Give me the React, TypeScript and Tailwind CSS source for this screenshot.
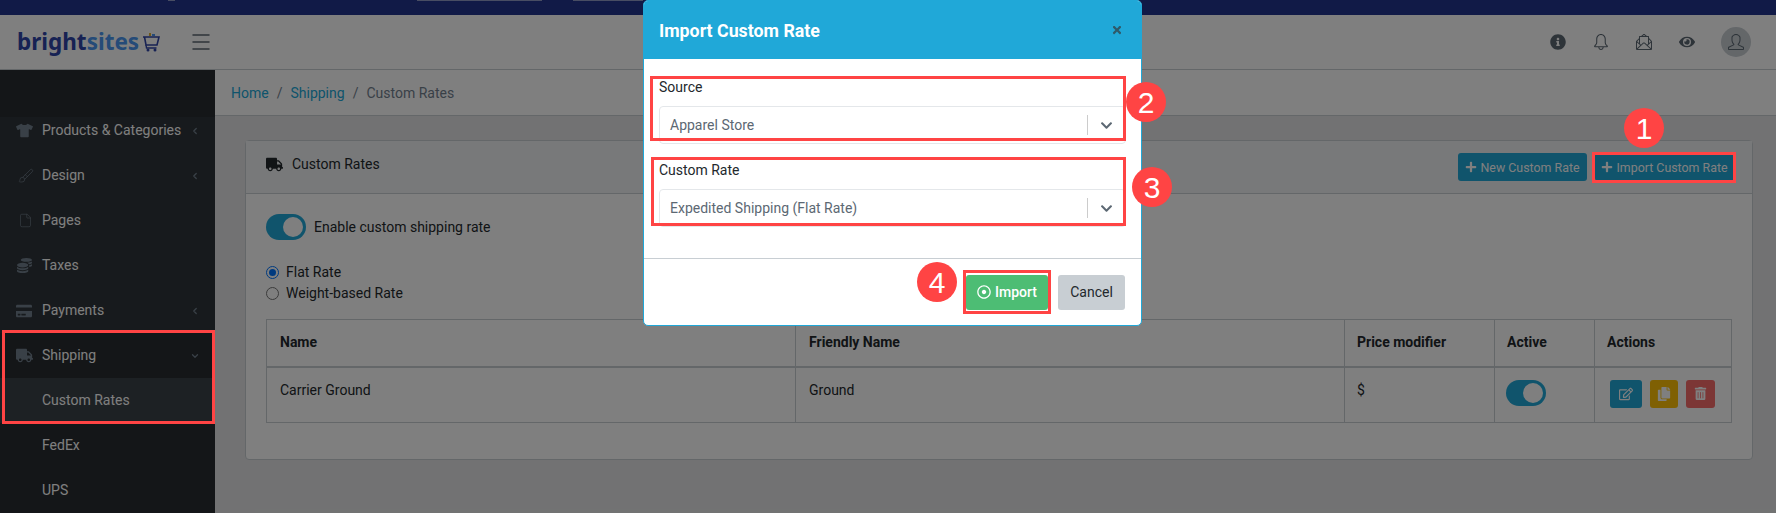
import { Brush, File, ChevronLeft, ChevronDown, Menu } from "lucide-react";
import { FaTshirt, FaCoins, FaCreditCard, FaTruck, FaInfoCircle, FaEye, FaPlus, FaTimes, FaRegDotCircle, FaRegEdit, FaCopy, FaTrashAlt, FaChevronDown } from "react-icons/fa";
import { SlBell, SlEnvolopeLetter, SlUser } from "react-icons/sl";

const menu = [
  { label: "Products & Categories", icon: <FaTshirt size={17} />, arrow: true },
  { label: "Design", icon: <Brush size={16} strokeWidth={1} className="ml-[2px]" />, arrow: true },
  { label: "Pages", icon: <File size={15} strokeWidth={1} className="ml-[2px]" /> },
  { label: "Taxes", icon: <FaCoins size={15} className="ml-[1px]" /> },
  { label: "Payments", icon: <FaCreditCard size={16} />, arrow: true },
];

function Toggle() {
  return (
    <span className="flex h-[26px] w-10 items-center justify-end rounded-full bg-[#20a8d8] pr-[3px]">
      <span className="h-5 w-5 rounded-full bg-white" />
    </span>
  );
}

function Callout({ n, className }: { n: number; className: string }) {
  return (
    <span className={"absolute flex h-10 w-10 items-center justify-center rounded-full bg-[#ff4444] text-[30px] text-white " + className} style={{ fontFamily: "Liberation Sans, sans-serif" }}>
      {n}
    </span>
  );
}

function SelectBox({ label, value }: { label: string; value: string }) {
  return (
    <div>
      <div className="text-[#23282c]">{label}</div>
      <div className="mt-[8px] flex h-[38px] items-center rounded border border-[#e4e7ea] pl-[10px] text-[#5c6873]">
        <span className="flex-1">{value}</span>
        <span className="h-5 w-px bg-[#ccc]" />
        <span className="flex w-[37px] justify-center"><FaChevronDown size={13} className="text-[#5c6873]" /></span>
      </div>
    </div>
  );
}

function CartLogo() {
  return (
    <svg width="17" height="19" viewBox="0 0 17 19" fill="none" className="ml-[4px]">
      <rect x="6" y="0" width="2" height="3" fill="#e0b030" />
      <rect x="9" y="1" width="3" height="2" fill="#4a96f0" />
      <path d="M0 4h16l-2 8H3L1.5 4" stroke="#2f45a8" strokeWidth="1.6" />
      <path d="M3 12l.5 3h10" stroke="#2f45a8" strokeWidth="1.4" />
      <circle cx="5" cy="17" r="1.5" fill="#2f45a8" />
      <circle cx="12" cy="17" r="1.5" fill="#2f45a8" />
    </svg>
  );
}

export default function App() {
  return (
    <div className="relative h-[513px] w-[1776px] overflow-hidden bg-[#e4e5e6] text-[14px] leading-[21px] text-[#23282c]" style={{ fontFamily: "Roboto, sans-serif" }}>
      <div className="flex h-[15px] bg-[#22358f]">
        <span className="ml-[168px] h-px w-[7px] bg-white/50" />
        <span className="ml-[242px] h-px w-[125px] bg-white/50" />
        <span className="ml-[31px] h-px w-[70px] bg-white/50" />
      </div>
      <header className="flex h-[55px] items-center border-b border-[#c8ced3] bg-white">
        <div className="flex w-[215px] items-center pl-[17px] text-[22.5px] font-bold leading-none" style={{ fontFamily: "'Noto Sans', sans-serif" }}>
          <span className="text-[#2f45a8]">bright</span><span className="text-[#4a96f0]">sites</span>
          <CartLogo />
        </div>
        <Menu size={24} strokeWidth={1.5} className="-ml-[26px] text-[#5c6873]" />
        <div className="ml-auto mr-[25px] flex items-center gap-[27px] text-[#5c6873]">
          <FaInfoCircle size={16} />
          <SlBell size={16} />
          <SlEnvolopeLetter size={16} />
          <FaEye size={16} />
          <span className="-ml-[1px] flex h-[30px] w-[30px] items-center justify-center rounded-full bg-[#c8ced3]"><SlUser size={16} /></span>
        </div>
      </header>
      <div className="flex h-[443px]">
        <aside className="w-[215px] shrink-0 bg-[#2f353a] text-white">
          <div className="h-[47px] bg-[#282c30]" />
          <div className="-mt-[9px]">
            {menu.map(m => (
              <div key={m.label} className="flex h-[45px] items-center pl-[16px] pr-[15px]">
                <span className="w-[26px] text-[#73818f]">{m.icon}</span>
                <span className="flex-1">{m.label}</span>
                {m.arrow && <ChevronLeft size={10} strokeWidth={3} className="text-[#73818f]" />}
              </div>
            ))}
            <div className="flex h-[45px] items-center bg-[#282c30] pl-[16px] pr-[15px]">
              <span className="w-[26px] text-[#73818f]"><FaTruck size={17} /></span>
              <span className="flex-1">Shipping</span>
              <ChevronDown size={10} strokeWidth={3} className="text-[#73818f]" />
            </div>
            <div className="flex h-[45px] items-center bg-[#3a4248] pl-[42px]">Custom Rates</div>
            <div className="flex h-[45px] items-center bg-[#282c30] pl-[42px]">FedEx</div>
            <div className="flex h-[45px] items-center bg-[#282c30] pl-[42px]">UPS</div>
          </div>
        </aside>
        <main className="flex-1 pr-[23px]">
          <div className="-mr-[23px] flex h-[46px] items-center border-b border-[#c8ced3] bg-white pl-[16px] pt-[1px]">
            <span className="text-[#20a8d8]">Home</span>
            <span className="px-2 text-[#73818f]">/</span>
            <span className="text-[#20a8d8]">Shipping</span>
            <span className="px-2 text-[#73818f]">/</span>
            <span className="text-[#73818f]">Custom Rates</span>
          </div>
          <section className="ml-[30px] mt-[24px] h-[320px] rounded border border-[#c8ced3] bg-white">
            <div className="flex h-[53px] items-center border-b border-[#c8ced3] bg-[#f0f3f5] pl-[20px] pr-[18px]">
              <FaTruck size={17} className="mb-[5px] mr-[9px]" />
              <span className="mb-[5px]">Custom Rates</span>
              <button className="ml-auto flex h-[28px] w-[129px] items-center justify-center gap-[3px] rounded-[3px] bg-[#20a8d8] text-[12.4px] text-white"><FaPlus size={12} />New Custom Rate</button>
              <button className="ml-[8px] flex h-[28px] w-[139px] items-center justify-center gap-[3px] rounded-[3px] bg-[#20a8d8] text-[12.4px] text-white"><FaPlus size={12} />Import Custom Rate</button>
            </div>
            <div className="px-[20px] pt-[20px]">
              <div className="flex items-center gap-[8px]"><Toggle /><span>Enable custom shipping rate</span></div>
              <div className="mt-[22px] flex items-center gap-[7px]"><span className="flex h-[13px] w-[13px] items-center justify-center rounded-full border border-[#0075ff]"><span className="h-[7px] w-[7px] rounded-full bg-[#0075ff]" /></span>Flat Rate</div>
              <div className="flex items-center gap-[7px]"><span className="h-[13px] w-[13px] rounded-full border border-[#767676]" />Weight-based Rate</div>
              <table className="mt-[15px] w-full table-fixed border-collapse border border-[#c8ced3] text-left">
                <thead>
                  <tr className="h-[47px] border-b-2 border-[#c8ced3] font-bold">
                    <th className="w-[529px] border border-[#c8ced3] px-[13px]">Name</th>
                    <th className="border border-[#c8ced3] px-[13px]">Friendly Name</th>
                    <th className="w-[150px] border border-[#c8ced3] px-[12px]">Price modifier</th>
                    <th className="w-[100px] border border-[#c8ced3] px-[12px]">Active</th>
                    <th className="w-[137px] border border-[#c8ced3] px-[12px]">Actions</th>
                  </tr>
                </thead>
                <tbody>
                  <tr className="h-[56px] align-top">
                    <td className="border border-[#c8ced3] px-[13px] pt-[12px]">Carrier Ground</td>
                    <td className="border border-[#c8ced3] px-[13px] pt-[12px]">Ground</td>
                    <td className="border border-[#c8ced3] px-[12px] pt-[12px]">$</td>
                    <td className="border border-[#c8ced3] px-[11px] pt-[12px]"><Toggle /></td>
                    <td className="border border-[#c8ced3] pl-[15px] pt-[12px]">
                      <div className="flex gap-[8px]">
                        <span className="flex h-[28px] w-[32px] items-center justify-center rounded-[3px] bg-[#20a8d8] text-white"><FaRegEdit size={14} /></span>
                        <span className="flex h-[28px] w-[28px] items-center justify-center rounded-[3px] bg-[#ffc107] text-white"><FaCopy size={14} /></span>
                        <span className="flex h-[28px] w-[29px] items-center justify-center rounded-[3px] bg-[#f86c6b] text-white"><FaTrashAlt size={13} /></span>
                      </div>
                    </td>
                  </tr>
                </tbody>
              </table>
            </div>
          </section>
        </main>
      </div>

      <div className="absolute inset-0 bg-black/50" />

      <div className="absolute left-[643px] top-0 h-[326px] w-[499px] overflow-hidden rounded-[5px] border border-[#20a8d8] bg-white">
        <div className="flex h-[58px] items-center justify-between bg-[#20a8d8] pl-[15px] pr-[18px] text-white">
          <span className="text-[17.8px] font-bold">Import Custom Rate</span>
          <FaTimes size={12} className="text-[#2f5a6a]" />
        </div>
        <div className="h-[199px] px-[15px] pt-[18px]">
          <SelectBox label="Source" value="Apparel Store" />
          <div className="h-[16px]" />
          <SelectBox label="Custom Rate" value="Expedited Shipping (Flat Rate)" />
        </div>
        <div className="flex h-[67px] items-center justify-end gap-[10px] border-t border-[#c8ced3] pr-[16px]">
          <button className="flex h-[35px] w-[82px] items-center justify-center gap-[4px] rounded-[3px] bg-[#4dbd74] font-medium text-white"><FaRegDotCircle size={14} />Import</button>
          <button className="h-[35px] w-[67px] rounded-[3px] bg-[#c8ced3] text-[#23282c]">Cancel</button>
        </div>
      </div>

      <div className="absolute left-[2px] top-[330px] h-[94px] w-[213px] border-[3px] border-[#ff4444]" />
      <div className="absolute left-[650px] top-[76px] h-[65px] w-[476px] border-[3px] border-[#ff4444]" />
      <div className="absolute left-[651px] top-[157px] h-[69px] w-[475px] border-[3px] border-[#ff4444]" />
      <div className="absolute left-[963px] top-[270px] h-[44px] w-[88px] border-[3px] border-[#ff4444]" />
      <div className="absolute left-[1592px] top-[152px] h-[31px] w-[144px] border-[3px] border-[#ff4444]" />
      <Callout n={1} className="left-[1624px] top-[108px]" />
      <Callout n={2} className="left-[1126px] top-[82px]" />
      <Callout n={3} className="left-[1132px] top-[167px]" />
      <Callout n={4} className="left-[917px] top-[262px]" />
    </div>
  );
}
